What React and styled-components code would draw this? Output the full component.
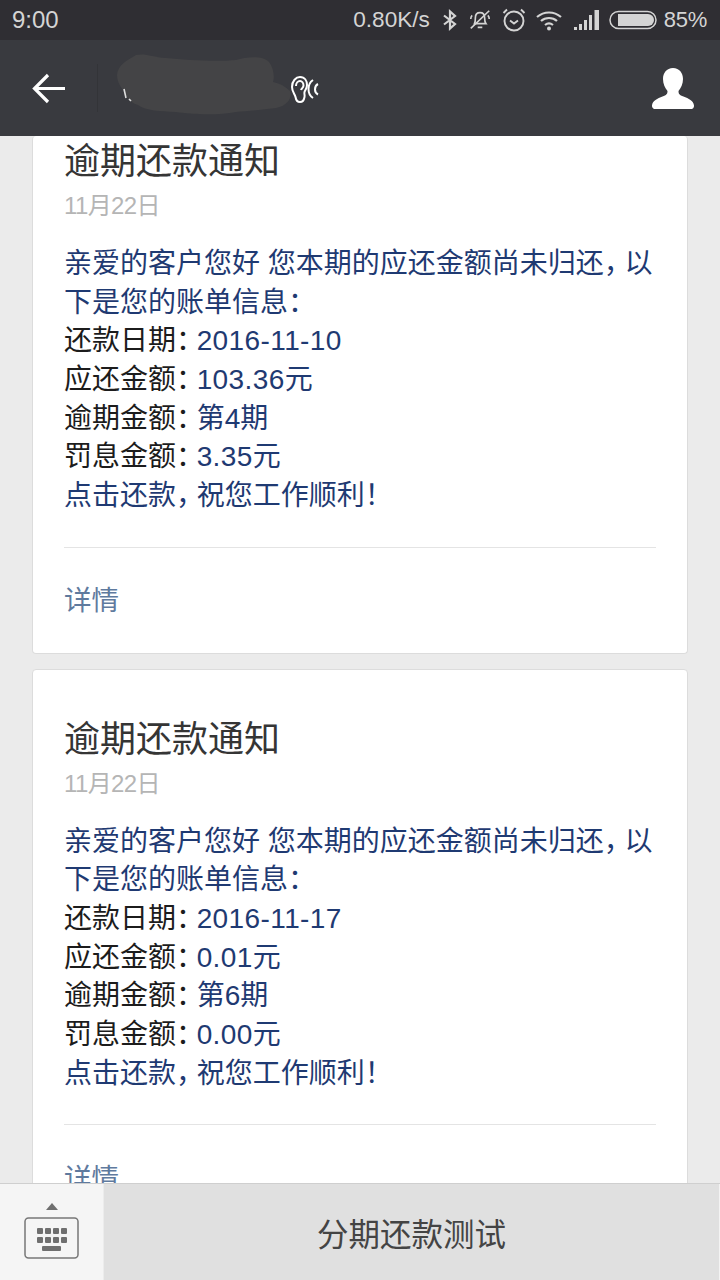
import React from "react";
import styled, { createGlobalStyle } from "styled-components";

const Global = createGlobalStyle`
  html, body { margin: 0; padding: 0; background: #ebebeb; }
  * { box-sizing: border-box; }
`;
const FONT = `"Liberation Sans", "Noto Sans CJK SC", sans-serif`;

const Page = styled.div`
  width: 720px; height: 1280px; display: flex; flex-direction: column;
  overflow: hidden; font-family: ${FONT}; background: #ebebeb;
`;
const StatusBar = styled.div`
  height: 40px; flex: none; background: #2f2e33; color: #d4d4d4;
  display: flex; align-items: center; justify-content: space-between;
  padding: 0 12px; font-size: 24px;
`;
const StatusRight = styled.div`display: flex; align-items: center;`;
const Speed = styled.span`margin-right: 12px; font-size: 22.6px;`;
const Percent = styled.span`margin-left: 7px; font-size: 22px; margin-right: 1px; letter-spacing: -0.3px;`;
const StatusIcon = styled.svg`display: block; flex: none; margin-left: ${p => p.$gap || 0}px;`;

const Header = styled.header`
  height: 96px; flex: none; background: #393a3f; display: flex; align-items: center;
  padding: 0 26px 0 32px;
`;
const BackIcon = styled.svg`display: block; flex: none; margin-top: 1px;`;
const Divider = styled.div`width: 1px; height: 48px; background: #333438; margin: 0 18px 0 31px; flex: none;`;
const TitleArt = styled.svg`display: block; flex: none;`;
const Spacer = styled.div`flex: 1;`;

const Feed = styled.main`
  flex: 1; min-height: 0; overflow: hidden; display: flex; flex-direction: column; gap: 15px;
  padding: 0 32px;
`;
const Card = styled.article`
  flex: none; background: #fff; border: 1px solid #dcdcdc; border-radius: 4px;
  padding: ${p => (p.$scrolled ? "2px" : "46px")} 31px 0 31px;
  border-top: ${p => (p.$scrolled ? "none" : "1px solid #dcdcdc")};
`;
const Title = styled.h2`
  margin: 0; font-size: 36px; font-weight: 400; line-height: 48px; color: #353535;
`;
const DateLine = styled.div`
  font-size: 24px; line-height: 30px; color: #b5b5b5; margin-top: 5px; letter-spacing: -0.6px;
`;
const Body = styled.div`
  margin-top: 24px; font-size: 28px; line-height: 38.65px; color: #1f3a72; white-space: nowrap;
`;
const Label = styled.span`color: #1c1c1c;`;
const Value = styled.span`letter-spacing: 0.4px;`;
const Punct = styled.span`letter-spacing: -7.4px;`;
const Foot = styled.div`
  margin-top: 31px; border-top: 1px solid #e4e4e4; height: 106px; padding-bottom: 4px;
  display: flex; align-items: center; font-size: 27.5px; color: #5f7a9e;
`;
const Footer = styled.footer`
  height: 97px; flex: none; display: flex; border-top: 1px solid #cfcfcf; background: #e0e0e0;
`;
const KeyToggle = styled.div`
  width: 104px; flex: none; background: #f5f5f5; border-right: 1px solid #ececec;
  display: flex; align-items: center; justify-content: center; padding: 0 0 3px 0;
`;
const MenuButton = styled.div`
  flex: 1; display: flex; align-items: center; justify-content: center;
  font-size: 31.5px; color: #444; border-right: 1px solid #f3f3f3;
`;

const notices = [
  { date: "2016-11-10", amount: "103.36", period: "第4期", fine: "3.35", scrolled: true },
  { date: "2016-11-17", amount: "0.01", period: "第6期", fine: "0.00" },
];

const Notice = ({ n }) => (
  <Card $scrolled={n.scrolled}>
    <Title>逾期还款通知</Title>
    <DateLine>11月22日</DateLine>
    <Body>
      亲爱的客户您好 您本期的应还金额尚未归还<Punct>，</Punct>以<br />
      下是您的账单信息<Punct>：</Punct><br />
      <Label>还款日期<Punct>：</Punct></Label><Value>{n.date}</Value><br />
      <Label>应还金额<Punct>：</Punct></Label><Value>{n.amount}</Value>元<br />
      <Label>逾期金额<Punct>：</Punct></Label>{n.period}<br />
      <Label>罚息金额<Punct>：</Punct></Label><Value>{n.fine}</Value>元<br />
      点击还款<Punct>，</Punct>祝您工作顺利！
    </Body>
    <Foot>详情</Foot>
  </Card>
);

export default function App() {
  return (
    <Page>
      <Global />
      <StatusBar>
        <span>9:00</span>
        <StatusRight>
          <Speed>0.80K/s</Speed>
          <StatusIcon width="16" height="24" viewBox="0 0 16 24" fill="none" stroke="#d4d4d4" strokeWidth="2.2">
            <path d="M2 7.5 13 16 8 20.5V3.5L13 8 2 16.5" />
          </StatusIcon>
          <StatusIcon $gap="10" width="24" height="26" viewBox="0 0 26 26" fill="none" stroke="#d4d4d4" strokeWidth="1.8">
            <path d="M7 17c1-2 1-4 1-6.500C8 7 10 5 13 5s5 2 5 5.500c0 2.500 0 4.500 1.500 6.500z" />
            <path d="M10.500 21h5M3 12c0-2 .5-3 1.500-4M23 12c0-2-.5-3-1.500-4M3 22 23 3" />
          </StatusIcon>
          <StatusIcon $gap="10" width="24" height="26" viewBox="0 0 24 26" fill="none" stroke="#d4d4d4" strokeWidth="1.9">
            <circle cx="12" cy="14" r="9.500" />
            <path d="M8 13.500l4 3 4-3M1.500 6 5 2.500M22.500 6 19 2.500" />
          </StatusIcon>
          <StatusIcon $gap="10" width="26" height="24" viewBox="0 0 26 24" fill="none" stroke="#d4d4d4" strokeWidth="2.2">
            <path d="M1 9c7-6 17-6 24 0M5 13c4.500-4 11.500-4 16 0M9 17c2.500-2 5.500-2 8 0" />
            <circle cx="13" cy="20.500" r="2" fill="#d4d4d4" stroke="none" />
          </StatusIcon>
          <StatusIcon $gap="12" width="25" height="20" viewBox="0 0 25 20" fill="#d4d4d4">
            <path d="M0 17h3v3H0zM5 14h3v6H5zM10 10h3v10h-3zM15 5h3v15h-3zM20.500 0H25v20h-4.500z" />
          </StatusIcon>
          <StatusIcon $gap="10" width="48" height="20" viewBox="0 0 48 20" fill="none">
            <rect x="1" y="1.500" width="46" height="17" rx="8.500" stroke="#d4d4d4" strokeWidth="1.500" />
            <path d="M9 4h30a6 6 0 0 1 0 12H9z" fill="#d4d4d4" />
          </StatusIcon>
          <Percent>85%</Percent>
        </StatusRight>
      </StatusBar>

      <Header>
        <BackIcon width="34" height="34" viewBox="0 0 34 34" fill="none" stroke="#fff" strokeWidth="3.200">
          <path d="M33 16.500H3M16 3 2.500 16.500 16 30" />
        </BackIcon>
        <Divider />
        <TitleArt width="208" height="70" viewBox="0 0 208 70" fill="none">
          <path d="M1 22C2 12 10 8 20 2c10-2 16 2 30 3 20 2 50 4 70 2 10-3 26-5 33 2 4 5 6 14 4 20 6 1 12 4 17 9 2 6-1 14-14 17-14 2-30 3-40 4-20 4-46 2-60 0-16-1-30-1-38-7-10-3-12-10-15-15-4-5-6-10-6-15z" fill="#444446" />
          <path d="M8 36 10 45M13 46l2 2" stroke="#ddd" strokeWidth="1.600" />
          <path d="M184 49c-3 0-4-2-4.500-5-.6-3-3.500-5-3.500-10 0-6 4-10 8-10 5 0 7 4 7 8 0 4-2 5-2.500 7-.5 2 .5 3 0 5-.5 3-2 5-4.500 5zM180 33c0-3 2-5 4-5s3.500 2 3.500 4.500c0 2-2 3-2.500 4.500" stroke="#fff" strokeWidth="2" />
          <path d="M197 27c-3 2-4.500 5-4.500 9s1.500 7 4.500 9M202 31c-2 1-3 3-3 5.500s1 4 3 5" stroke="#fff" strokeWidth="2" />
        </TitleArt>
        <Spacer />
        <svg width="42" height="42" viewBox="0 0 42 42" fill="#fff" style={{ display: "block", flex: "none" }}>
          <path d="M21 1c6.500 0 10 5 10 11 0 5-2 9-4.500 12 0 3 1 4 5 5.500 5 2 10 4 10.500 9 .2 2-1 3.500-2.500 3.500H2.500C1 41.500-.2 40 0 38.500c.5-5 5.500-7 10.500-9 4-1.500 5-2.500 5-5.500C13 21 11 17 11 12c0-6 3.500-11 10-11z" />
        </svg>
      </Header>

      <Feed>
        {notices.map((n) => <Notice key={n.date} n={n} />)}
      </Feed>

      <Footer>
        <KeyToggle>
          <svg width="56" height="58" viewBox="0 0 56 58" fill="none">
            <path d="M22 8h12l-6-7z" fill="#6f6f6f" />
            <rect x="1" y="16" width="53" height="40" rx="3.500" stroke="#777" strokeWidth="1.500" />
            <g fill="#6f6f6f">
              <rect x="13" y="26" width="6" height="6" rx="1" /><rect x="21" y="26" width="6" height="6" rx="1" />
              <rect x="29" y="26" width="6" height="6" rx="1" /><rect x="37" y="26" width="6" height="6" rx="1" />
              <rect x="13" y="35" width="6" height="6" rx="1" /><rect x="21" y="35" width="6" height="6" rx="1" />
              <rect x="29" y="35" width="6" height="6" rx="1" /><rect x="37" y="35" width="6" height="6" rx="1" />
              <rect x="18" y="44" width="19" height="5" rx="1" />
            </g>
          </svg>
        </KeyToggle>
        <MenuButton>分期还款测试</MenuButton>
      </Footer>
    </Page>
  );
}
